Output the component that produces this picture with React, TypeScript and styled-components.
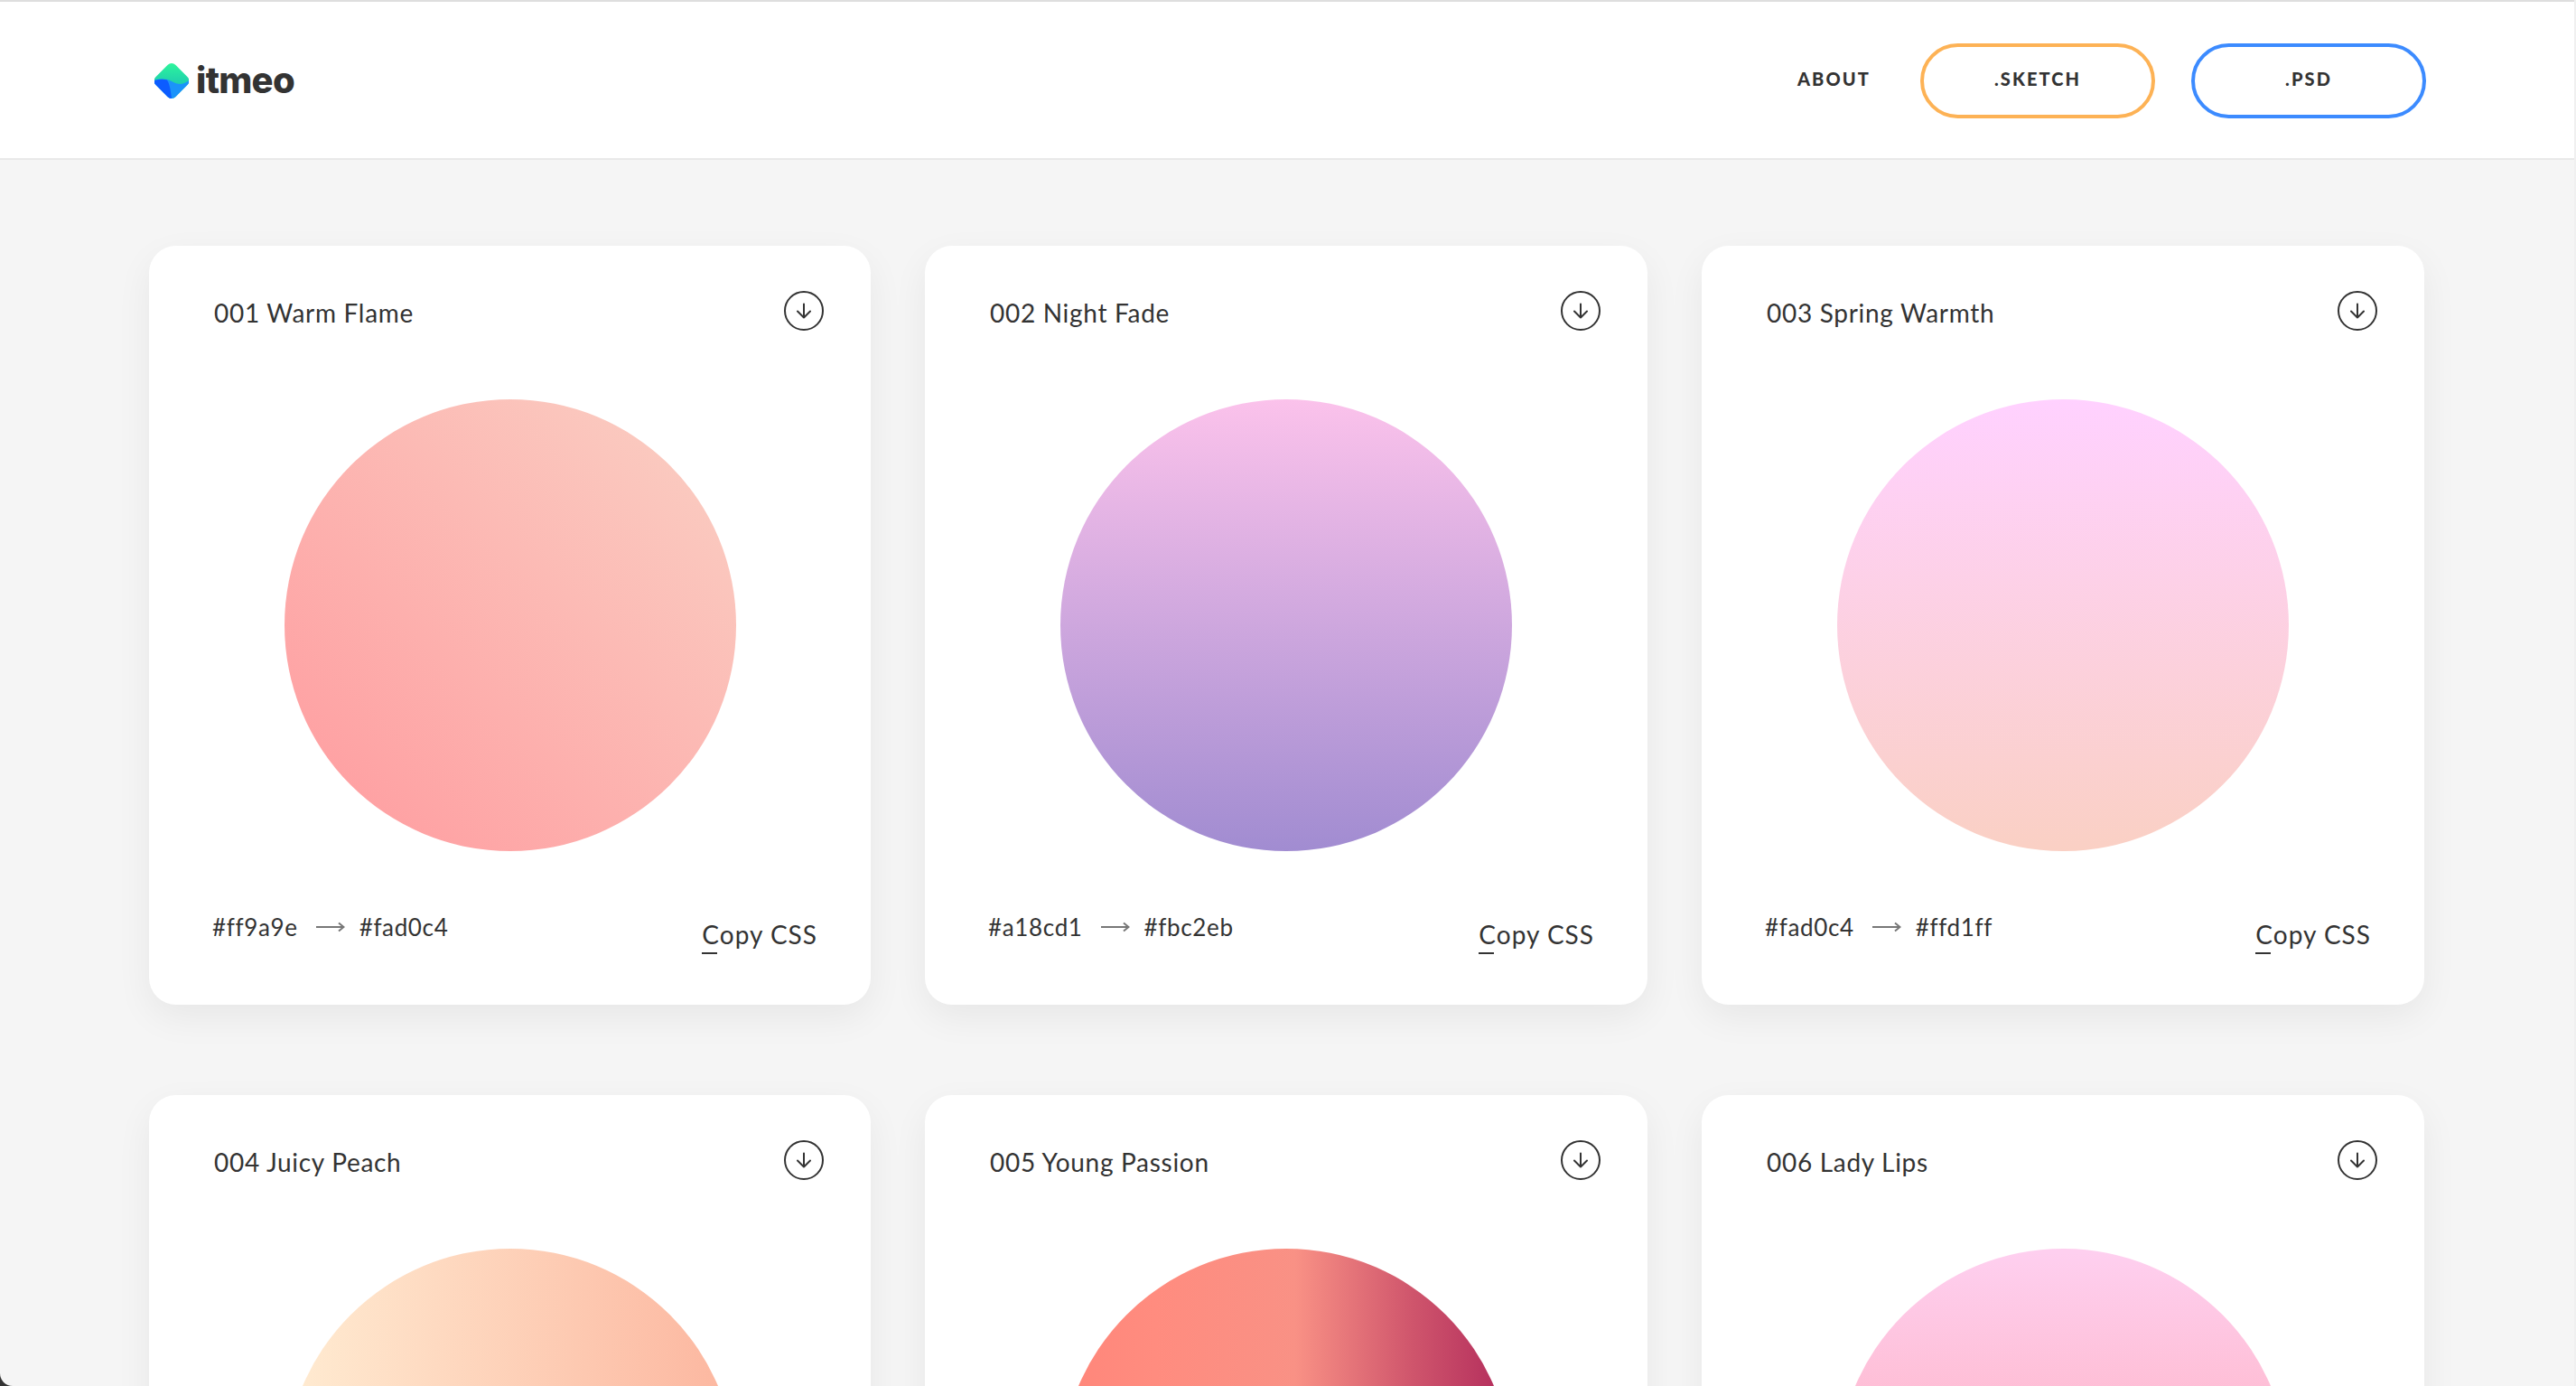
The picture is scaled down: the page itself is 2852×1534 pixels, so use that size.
import styled, { createGlobalStyle } from 'styled-components'

type Gradient = {
  id: string
  name: string
  css: string
  from?: string
  to?: string
}

// the second row runs off the bottom of the window, so its colours are never seen
const gradients: Gradient[] = [
  { id: '001', name: 'Warm Flame', from: '#ff9a9e', to: '#fad0c4', css: 'linear-gradient(45deg, #ff9a9e 0%, #fad0c4 99%, #fad0c4 100%)' },
  { id: '002', name: 'Night Fade', from: '#a18cd1', to: '#fbc2eb', css: 'linear-gradient(to top, #a18cd1 0%, #fbc2eb 100%)' },
  { id: '003', name: 'Spring Warmth', from: '#fad0c4', to: '#ffd1ff', css: 'linear-gradient(to top, #fad0c4 0%, #ffd1ff 100%)' },
  { id: '004', name: 'Juicy Peach', css: 'linear-gradient(to right, #ffecd2 0%, #fcb69f 100%)' },
  {
    id: '005',
    name: 'Young Passion',
    css: 'linear-gradient(to right, #ff8177 0%, #ff867a 0%, #ff8c7f 21%, #f99185 52%, #cf556c 78%, #b12a5b 100%)',
  },
  { id: '006', name: 'Lady Lips', css: 'linear-gradient(to top, #ff9a9e 0%, #fecfef 99%, #fecfef 100%)' },
]

const Logo = () => (
  <svg width="38" height="39" viewBox="0 0 38 39">
    <defs>
      <linearGradient id="logoTop" x1="0" y1="0" x2="0" y2="1">
        <stop offset="0" stopColor="#2df59b" />
        <stop offset="0.6" stopColor="#1fcdaf" />
      </linearGradient>
      <clipPath id="logoClip">
        <rect x="3.5" y="4" width="31" height="31" rx="6" transform="rotate(45 19 19.5)" />
      </clipPath>
    </defs>
    <g clipPath="url(#logoClip)">
      <rect width="38" height="39" fill="url(#logoTop)" />
      <path d="M0 19C7 17 13 17 19 20C26 24 32 24 38 19V39H0Z" fill="#1b93fa" />
      <path d="M0 19C5 17.6 10 17.3 14 18.4C17 23 18 31 19 39H0Z" fill="#0c5cff" />
    </g>
  </svg>
)

const DownloadIcon = () => (
  <svg width="44" height="44" viewBox="0 0 44 44" fill="none" stroke="#333" strokeWidth="2" strokeLinecap="round" strokeLinejoin="round">
    <circle cx="22" cy="22" r="21" />
    <path d="M22 14.5V29.5M15 22.5L22 29.5L29 22.5" />
  </svg>
)

const ArrowIcon = styled.svg.attrs({
  width: 32,
  height: 12,
  viewBox: '0 0 32 12',
  fill: 'none',
  stroke: '#777',
  strokeWidth: 2,
  children: <path d="M0 6H30M25 1.5L30.5 6L25 10.5" />,
})`
  margin-left: 4px;
`

const App = () => {
  return (
    <>
      <GlobalStyle />
      <Page>
        <Header>
          <Brand>
            <Logo />
            <BrandName>itmeo</BrandName>
          </Brand>
          <Nav>
            <NavLink>ABOUT</NavLink>
            <PillButton $color="#fdb255">.SKETCH</PillButton>
            <PillButton $color="#3c8bff">.PSD</PillButton>
          </Nav>
        </Header>
        <CardGrid>
          {gradients.map((it) => (
            <Card key={it.id}>
              <CardHeader>
                <CardTitle>
                  {it.id} {it.name}
                </CardTitle>
                <DownloadIcon />
              </CardHeader>
              <Circle $gradient={it.css} />
              {it.from && (
                <CardFooter>
                  <Colors>
                    <span>{it.from}</span>
                    <ArrowIcon />
                    <span>{it.to}</span>
                  </Colors>
                  <CopyButton>Copy CSS</CopyButton>
                </CardFooter>
              )}
            </Card>
          ))}
        </CardGrid>
      </Page>
    </>
  )
}

export default App

const GlobalStyle = createGlobalStyle`
  html, body {
    margin: 0;
    padding: 0;
    background: #333;
    overflow: hidden;
  }
  * {
    box-sizing: border-box;
  }
`

const Page = styled.div`
  width: 2852px;
  height: 1534px;
  overflow: hidden;
  background: #f5f5f5;
  border-right: 2px solid #f0f0f0;
  border-bottom-left-radius: 14px;
  color: #333;
  font-family: Lato, 'Open Sans', sans-serif;
`

const Header = styled.header`
  height: 177px;
  background: #fff;
  border-top: 2px solid #dedede;
  border-bottom: 2px solid #e9e9e9;
  padding: 2px 164px 0 171px;
  display: flex;
  align-items: center;
  justify-content: space-between;
`

const Brand = styled.div`
  display: flex;
  align-items: center;
  gap: 8px;
`

const BrandName = styled.span`
  font-family: Inter, sans-serif;
  font-size: 40px;
  font-weight: 800;
  letter-spacing: -0.7px;
  line-height: 40px;
  margin-bottom: 2px;
  color: #333;
`

const Nav = styled.nav`
  display: flex;
  align-items: center;
`

const NavLink = styled.span`
  font-size: 20px;
  font-weight: 900;
  letter-spacing: 2.1px;
  margin-right: 55px;
  padding-bottom: 6px;
`

const PillButton = styled.div<{ $color: string }>`
  width: 260px;
  height: 83px;
  border: 4px solid ${(p) => p.$color};
  border-radius: 42px;
  margin-left: 40px;
  display: flex;
  align-items: center;
  justify-content: center;
  padding-bottom: 6px;
  font-size: 20px;
  font-weight: 900;
  letter-spacing: 2.1px;

  ${NavLink} + & {
    margin-left: 0;
  }
`

const CardGrid = styled.main`
  padding: 95px 0 0 165px;
  display: grid;
  grid-template-columns: 799px 800px 800px;
  column-gap: 60px;
  row-gap: 100px;
`

const Card = styled.section`
  height: 840px;
  background: #fff;
  border-radius: 30px;
  box-shadow: 0 14px 40px rgba(0, 0, 0, 0.06);
  padding-top: 50px;
  display: flex;
  flex-direction: column;
  align-items: center;
`

const CardHeader = styled.div`
  align-self: stretch;
  height: 44px;
  padding: 0 52px 0 72px;
  display: flex;
  align-items: center;
  justify-content: space-between;
`

const CardTitle = styled.h3`
  margin: 4px 0 0;
  font-size: 28px;
  font-weight: 400;
  letter-spacing: 0.7px;
`

const Circle = styled.div<{ $gradient: string }>`
  width: 500px;
  height: 500px;
  flex-shrink: 0;
  margin-top: 76px;
  border-radius: 50%;
  background: ${(p) => p.$gradient};
`

const CardFooter = styled.div`
  align-self: stretch;
  margin-top: 68px;
  padding: 0 59px 0 70px;
  display: flex;
  align-items: flex-start;
  justify-content: space-between;
`

const Colors = styled.div`
  display: flex;
  align-items: center;
  gap: 16px;
  font-size: 26px;
  line-height: 32px;
  letter-spacing: 0.65px;
`

const CopyButton = styled.span`
  position: relative;
  margin-top: 8px;
  font-size: 28px;
  line-height: 32px;
  letter-spacing: 1px;

  &::after {
    content: '';
    position: absolute;
    left: 0;
    bottom: -6px;
    width: 17px;
    height: 2px;
    background: #333;
  }
`
